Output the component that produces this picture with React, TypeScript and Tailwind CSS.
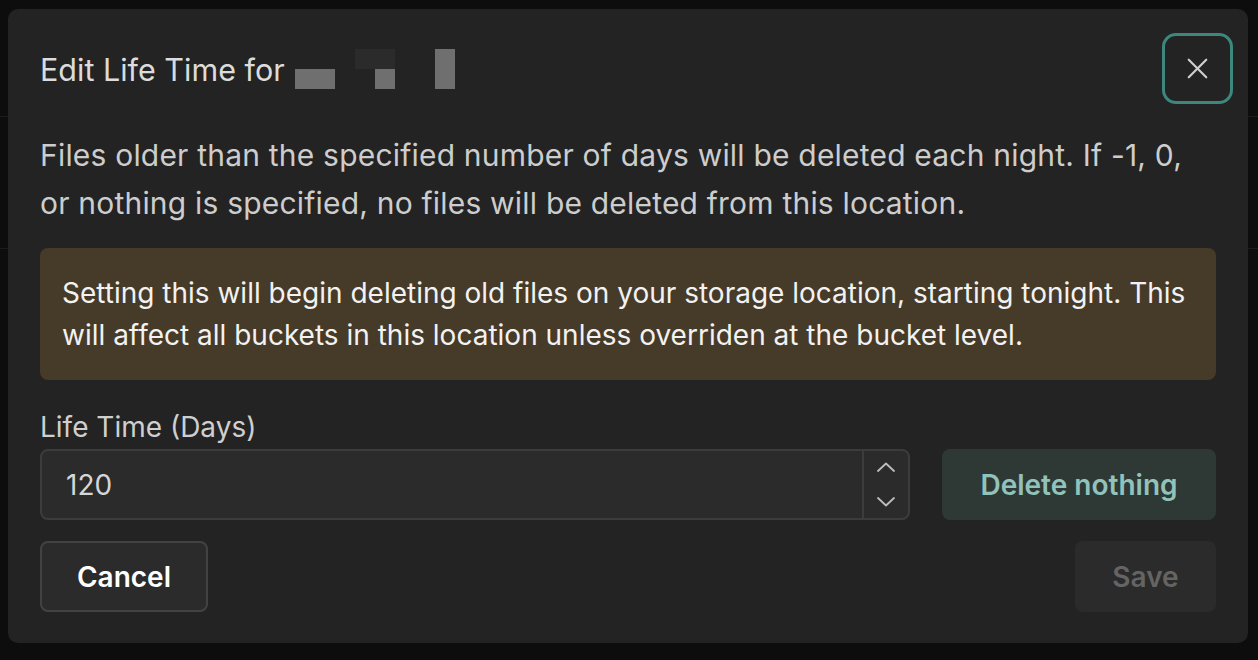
import { X } from "lucide-react";

function Chevron({ up }: { up?: boolean }) {
  return (
    <svg width="18" height="10" viewBox="0 0 18 10" fill="none">
      <path
        d={up ? "M1 9 L9 1.5 L17 9" : "M1 1 L9 8.5 L17 1"}
        stroke="#bdbdbd"
        strokeWidth="1.8"
        strokeLinecap="round"
        strokeLinejoin="round"
      />
    </svg>
  );
}

export default function App() {
  return (
    <div className="relative h-[660px] w-[1258px] overflow-hidden bg-[#0d0d0d] font-['Inter',sans-serif]">
      {/* page behind the dialog */}
      <div className="absolute left-0 right-0 top-[116px] h-px bg-[#1c1c1c]" />
      <div className="absolute left-0 right-0 top-[248px] h-px bg-[#1c1c1c]" />

      <div className="relative ml-[8px] mt-[9px] flex h-[634px] w-[1240px] flex-col rounded-[10px] bg-[#232323] pb-[32px] pl-[32px] pr-[15px] pt-[24px]">
        <div className="flex items-center justify-between">
          <div className="flex items-center text-[30.5px] leading-[36px] text-[#dcdcdc]">
            <span className="pt-[2px]">Edit Life Time for</span>
            <div className="ml-[10px] flex h-[40px] items-end">
              <div className="h-[20px] w-[40px] bg-[#6f6f6f]" />
              <div className="ml-[20px] flex h-[40px] w-[40px] flex-col">
                <div className="h-[20px] w-[40px] bg-[#2b2b2b]" />
                <div className="ml-[20px] h-[20px] w-[20px] bg-[#6f6f6f]" />
              </div>
              <div className="ml-[40px] h-[40px] w-[20px] bg-[#6f6f6f]" />
            </div>
          </div>
          <button className="flex h-[71px] w-[71px] items-center justify-center rounded-[14px] border-[3px] border-[#3d877d] text-[#cfcfcf]">
            <X size={35} strokeWidth={1.5} />
          </button>
        </div>

        <div className="pr-[17px]">
          <p className="mt-[27px] text-[30px] leading-[48px] tracking-[0.2px] text-[#cdcdcd]">
            Files older than the specified number of days will be deleted each night. If -1, 0, or nothing is
            specified, no files will be deleted from this location.
          </p>

          <div className="mt-[21px] rounded-[8px] bg-[#463a28] px-[22px] py-[24px] text-[28px] leading-[42px] text-[#f2f2f2]">
            Setting this will begin deleting old files on your storage location, starting tonight. This will affect all
            buckets in this location unless overriden at the bucket level.
          </div>

          <div className="mt-[29px] text-[28px] leading-[36px] text-[#cfcfcf]">Life Time (Days)</div>

          <div className="mt-[4px] flex gap-[32px]">
            <div className="flex h-[71px] flex-1 rounded-[8px] border-2 border-[#3c3c3c] bg-[#2b2b2b]">
              <div className="flex flex-1 items-center pl-[24px] text-[28px] text-[#d6d6d6]">120</div>
              <div className="flex w-[46px] flex-col items-center justify-between border-l-2 border-[#3c3c3c] pb-[11px] pt-[11px]">
                <Chevron up />
                <Chevron />
              </div>
            </div>
            <button className="h-[71px] w-[274px] rounded-[8px] bg-[#2e3936] text-[28px] font-semibold text-[#92c3ba]">
              Delete nothing
            </button>
          </div>

          <div className="mt-[21px] flex justify-between">
            <button className="h-[71px] w-[168px] rounded-[8px] border-2 border-[#424242] bg-[#2b2b2b] text-[28px] font-semibold text-white">
              Cancel
            </button>
            <button className="h-[71px] w-[141px] rounded-[8px] bg-[#2b2b2b] text-[28px] font-semibold text-[#646464]">
              Save
            </button>
          </div>
        </div>
      </div>
    </div>
  );
}
